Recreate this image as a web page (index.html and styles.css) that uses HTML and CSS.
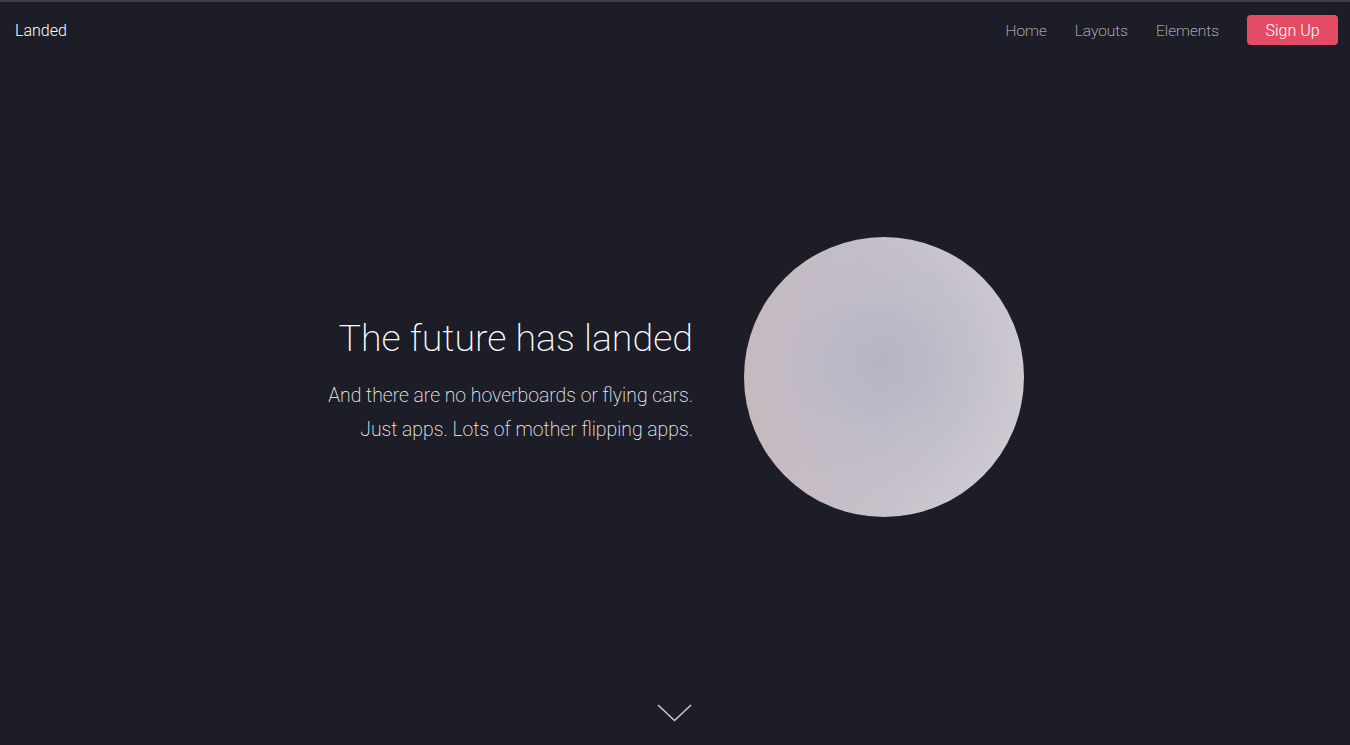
FILE: index.html
```html
<!DOCTYPE html>
<html lang="en">
<head>
<meta charset="utf-8">
<title>Landed</title>
<link rel="stylesheet" href="styles.css">
</head>
<body>
<div class="page">
  <header class="header">
    <a class="logo" href="#">Landed</a>
    <nav class="nav">
      <a class="nav-link" href="#">Home</a>
      <a class="nav-link" href="#">Layouts</a>
      <a class="nav-link" href="#">Elements</a>
      <a class="btn-signup" href="#">Sign Up</a>
    </nav>
  </header>
  <main class="banner">
    <div class="banner-text">
      <h1 class="title">The future has landed</h1>
      <p class="lead">And there are no hoverboards or flying cars.<br>Just apps. Lots of mother flipping apps.</p>
    </div>
    <div class="orb"></div>
  </main>
  <div class="more">
    <svg width="36" height="20" viewBox="0 0 36 20"><path d="M1 2 L17.5 17.5 L34 2" fill="none" stroke="#c8c8cc" stroke-width="1.6"/></svg>
  </div>
</div>
</body>
</html>
```
FILE: styles.css
```css
html, body {
  margin: 0;
  padding: 0;
  height: 100%;
  background: #1c1d26;
}
body {
  font-family: Roboto, "Liberation Sans", sans-serif;
  font-weight: 200;
  color: #ffffff;
}
.page {
  height: 745px;
  box-sizing: border-box;
  border-top: 2px solid #3d3d40;
  display: flex;
  flex-direction: column;
  overflow: hidden;
}
.header {
  height: 56px;
  display: flex;
  align-items: center;
  justify-content: space-between;
  padding: 0 12px 0 15px;
}
.logo {
  color: #ffffff;
  text-decoration: none;
  font-size: 16px;
  font-weight: 300;
}
.nav {
  display: flex;
  align-items: center;
  gap: 28px;
}
.nav-link {
  color: #d0d0d4;
  text-decoration: none;
  font-size: 15.5px;
  font-weight: 200;
  padding-top: 1px;
}
.btn-signup {
  display: flex;
  align-items: center;
  justify-content: center;
  width: 91px;
  height: 30px;
  background: #e44c65;
  border-radius: 4px;
  color: #ffffff;
  text-decoration: none;
  font-size: 16px;
  font-weight: 300;
}
.banner {
  flex: 1;
  display: flex;
  align-items: center;
  justify-content: center;
  gap: 51px;
}
.banner-text {
  width: 367px;
  padding-top: 8px;
  text-align: right;
}
.title {
  margin: 0 0 17px;
  font-size: 37.6px;
  font-weight: 200;
  line-height: 1.3;
  white-space: nowrap;
}
.lead {
  margin: 0;
  font-size: 19.4px;
  font-weight: 200;
  line-height: 34px;
  color: #f4f4f6;
}
.orb {
  width: 280px;
  height: 280px;
  border-radius: 50%;
  background:
    radial-gradient(circle at 50% 45%, rgba(180,178,196,0.9) 0%, rgba(186,183,198,0.6) 35%, rgba(200,192,200,0) 75%),
    linear-gradient(90deg, #c8b9bd 0%, #c6c0c8 40%, #cdc8cf 75%, #d1ccd2 100%);
}
.more {
  height: 42px;
  padding-top: 8px;
  display: flex;
  justify-content: center;
  align-items: flex-start;
}
```
